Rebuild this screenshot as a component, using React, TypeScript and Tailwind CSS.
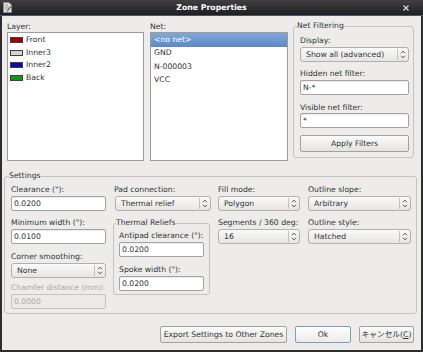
import type { ReactNode } from 'react';

const LAYERS = [
  { name: 'Front', color: 'bg-[#a00000]' },
  { name: 'Inner3', color: 'bg-[#d4d4d4]' },
  { name: 'Inner2', color: 'bg-[#0a0ab4]' },
  { name: 'Back', color: 'bg-[#0a9e0a]' },
];

const NETS = ['<no net>', 'GND', 'N-000003', 'VCC'];

function Label({ children, disabled = false }: { children: ReactNode; disabled?: boolean }) {
  return (
    <div className={`h-[10px] whitespace-nowrap ${disabled ? 'text-[#a8a8a8]' : ''}`}>{children}</div>
  );
}

function TextInput({ value, className = '', disabled = false }: { value: string; className?: string; disabled?: boolean }) {
  return (
    <div
      className={`flex h-[15px] items-center rounded-[2px] border pl-[2px] ${
        disabled
          ? 'border-[#c6c4c2] bg-[#ecebe9] text-[#a8a8a8]'
          : 'border-[#a2a2a2] bg-white shadow-[inset_0_1px_1px_rgba(0,0,0,0.08)]'
      } ${className}`}
    >
      {value}
    </div>
  );
}

function Arrows() {
  return (
    <svg width="6" height="9" viewBox="0 0 6 9" fill="none" stroke="#3a3a3a" strokeWidth="0.9">
      <path d="M1 3.2 L3 1.2 L5 3.2" />
      <path d="M1 5.8 L3 7.8 L5 5.8" />
    </svg>
  );
}

function Combo({ value, className = '' }: { value: string; className?: string }) {
  return (
    <div
      className={`flex h-[15px] items-center rounded-[3px] border border-[#b2b0ae] bg-gradient-to-b from-[#fafafa] to-[#e6e5e3] ${className}`}
    >
      <span className="flex-1 truncate pl-[5px]">{value}</span>
      <span className="flex h-[11px] w-[11px] items-center justify-center border-l border-[#c4c2c0]">
        <Arrows />
      </span>
    </div>
  );
}

function Button({ children, className = '', primary = false }: { children: ReactNode; className?: string; primary?: boolean }) {
  return (
    <div
      className={`flex h-[17px] items-center justify-center rounded-[2px] border ${
        primary
          ? 'border-[#7d9bc6] bg-gradient-to-b from-[#ffffff] to-[#ecebea]'
          : 'border-[#a4a2a0] bg-gradient-to-b from-[#fbfbfb] to-[#e4e3e1]'
      } ${className}`}
    >
      {children}
    </div>
  );
}

function Group({ title, className = '', legendClass = '', children }: { title: string; className?: string; legendClass?: string; children: ReactNode }) {
  return (
    <fieldset className={`rounded-[3px] border border-[#c5c3bf] p-0 ${className}`}>
      <legend className={`px-0 leading-[10px] ${legendClass}`}>{title}</legend>
      {children}
    </fieldset>
  );
}

function TitleBar() {
  return (
    <div className="relative flex h-[16px] shrink-0 items-center justify-center border-b border-[#4b5466] bg-gradient-to-b from-[#404040] to-[#1f1f1f]">
      <svg className="absolute left-[3px] top-[2px]" width="9" height="11" viewBox="0 0 9 11">
        <path d="M0.5 0.5 H6 L8.5 3 V10.5 H0.5 Z" fill="#e2e2e2" stroke="#8a8a8a" strokeWidth="0.8" />
        <path d="M2 3 H5 M2 5 H6.5 M2 7 H6.5" stroke="#7a7a7a" strokeWidth="0.7" />
        <path d="M4 9.5 L8 4.5" stroke="#5a5a5a" strokeWidth="1.2" />
      </svg>
      <span className="text-[7.8px] font-bold text-white">Zone Properties</span>
      <svg className="absolute right-[14px] top-[5px]" width="6" height="6" viewBox="0 0 6 6" stroke="#d8d8d8" strokeWidth="1.3">
        <path d="M0.5 0.5 L5.5 5.5 M5.5 0.5 L0.5 5.5" />
      </svg>
    </div>
  );
}

export default function App() {
  return (
    <div className="flex h-[352px] w-[423px] flex-col overflow-hidden bg-[#edecea] font-['DejaVu_Sans','Noto_Sans_CJK_JP',sans-serif] text-[7.7px] leading-[10px] text-[#2e3436]">
      <TitleBar />
      <div className="flex flex-1 flex-col border-x-2 border-b-2 border-[#2e2e2e]">
        {/* top row: layers, nets, net filtering */}
        <div className="mt-[5px] flex items-start">
          <div className="ml-[5px] w-[137px] pt-[1px]">
            <Label>Layer:</Label>
            <div className="h-[129px] border border-[#9c9c9c] bg-white pt-[1px]">
              {LAYERS.map((layer) => (
                <div key={layer.name} className="flex h-[12.5px] items-center pl-[2px]">
                  <span className={`mr-[3px] h-[6px] w-[13px] border border-[#404040] ${layer.color}`} />
                  {layer.name}
                </div>
              ))}
            </div>
          </div>

          <div className="ml-[6px] w-[138px] pt-[1px]">
            <Label>Net:</Label>
            <div className="h-[129px] border border-[#9c9c9c] bg-white">
              {NETS.map((net, i) => (
                <div
                  key={net}
                  className={`flex h-[13.5px] items-center pl-[3px] ${
                    i === 0 ? 'bg-gradient-to-b from-[#81a8db] to-[#5a89c6] text-white' : ''
                  }`}
                >
                  {net}
                </div>
              ))}
            </div>
          </div>

          <Group title="Net Filtering" className="ml-[5px] h-[137px] w-[121px]" legendClass="ml-[3px]">
            <div className="flex flex-col pl-[6px] pr-[4px] pt-[5px]">
              <Label>Display:</Label>
              <Combo value="Show all (advanced)" className="mt-[1px]" />
              <div className="mt-[7px]">
                <Label>Hidden net filter:</Label>
              </div>
              <TextInput value="N-*" className="mt-[1px]" />
              <div className="mt-[8px]">
                <Label>Visible net filter:</Label>
              </div>
              <TextInput value="*" />
              <Button className="mt-[7px] h-[16px]">Apply Filters</Button>
            </div>
          </Group>
        </div>

        {/* settings */}
        <Group title="Settings" className="ml-[2px] mt-[10px] w-[413px]" legendClass="ml-[4px]">
          <div className="flex pb-[4px] pl-[6px] pt-[4px]">
            <div className="flex w-[95px] flex-col">
              <Label>Clearance ("):</Label>
              <TextInput value="0.0200" className="mt-[1px]" />
              <div className="mt-[7px]">
                <Label>Minimum width ("):</Label>
              </div>
              <TextInput value="0.0100" className="mt-[1px]" />
              <div className="mt-[8px]">
                <Label>Corner smoothing:</Label>
              </div>
              <Combo value="None" className="mt-[1px]" />
              <div className="mt-[5px]">
                <Label disabled>Chamfer distance (mm):</Label>
              </div>
              <TextInput value="0.0000" className="mt-[1px]" disabled />
            </div>

            <div className="ml-[7px] flex w-[98px] flex-col">
              <div className="pl-[1px]">
                <Label>Pad connection:</Label>
              </div>
              <Combo value="Thermal relief" className="ml-[2px] mt-[1px] w-[96px]" />
              <Group title="Thermal Reliefs" className="mt-[7px] w-[97px]" legendClass="ml-[2px]">
                <div className="flex flex-col pb-[3px] pl-[5px] pt-[3px]">
                  <Label>Antipad clearance ("):</Label>
                  <TextInput value="0.0200" className="mt-[1px] w-[85px]" />
                  <div className="mt-[8px]">
                    <Label>Spoke width ("):</Label>
                  </div>
                  <TextInput value="0.0200" className="mt-[1px] w-[85px]" />
                </div>
              </Group>
            </div>

            <div className="ml-[7px] flex w-[82px] flex-col">
              <Label>Fill mode:</Label>
              <Combo value="Polygon" className="mt-[1px]" />
              <div className="mt-[7px]">
                <Label>Segments / 360 deg:</Label>
              </div>
              <Combo value="16" className="mt-[1px]" />
            </div>

            <div className="ml-[8px] flex w-[103px] flex-col">
              <Label>Outline slope:</Label>
              <Combo value="Arbitrary" className="mt-[1px]" />
              <div className="mt-[7px]">
                <Label>Outline style:</Label>
              </div>
              <Combo value="Hatched" className="mt-[1px]" />
            </div>
          </div>
        </Group>

        {/* dialog buttons */}
        <div className="mt-[12px] flex justify-end gap-[8px] pr-[7px]">
          <Button className="w-[127px]">Export Settings to Other Zones</Button>
          <Button className="w-[56px]" primary>
            Ok
          </Button>
          <Button className="w-[55px]">
            キャンセル(<span className="underline">C</span>)
          </Button>
        </div>
      </div>
    </div>
  );
}
